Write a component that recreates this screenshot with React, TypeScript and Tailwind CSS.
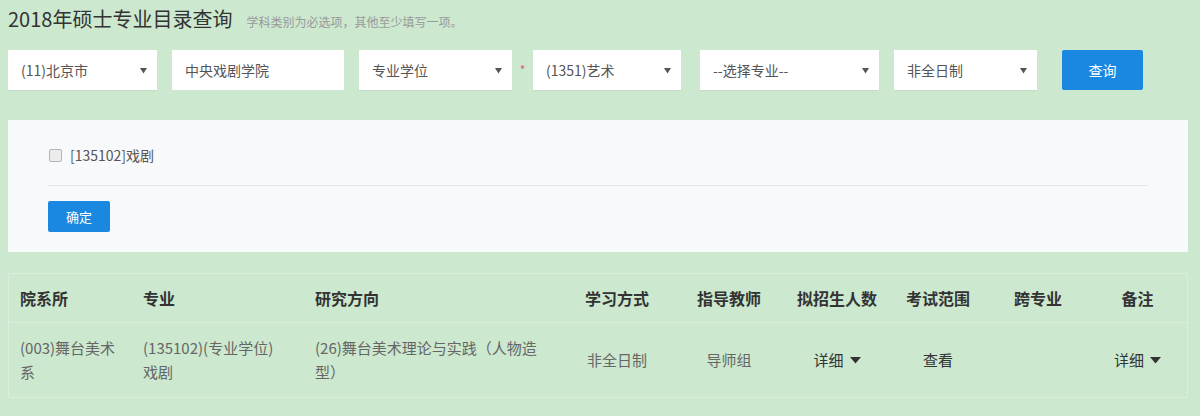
import React from "react";

const font = { fontFamily: '"Microsoft YaHei", "Noto Sans CJK SC", "Liberation Sans", sans-serif' };

function Arrow() {
  return (
    <svg width="7" height="7" viewBox="0 0 7 7" className="shrink-0">
      <path d="M0 1h7L3.5 6.5z" fill="#555" />
    </svg>
  );
}

function Select({ w, label }: { w: string; label: string }) {
  return (
    <div className={`${w} h-[40px] shrink-0 bg-white flex items-center justify-between pl-[13px] pr-[10px] text-[14px] text-[#555] shadow-[0_1px_1px_rgba(0,0,0,0.04)]`}>
      <span>{label}</span>
      <Arrow />
    </div>
  );
}

function Caret() {
  return (
    <svg width="11" height="7" viewBox="0 0 11 7" className="ml-[6px] inline-block">
      <path d="M0 0h11L5.5 6.5z" fill="#333" />
    </svg>
  );
}

export default function App() {
  return (
    <div className="w-[1200px] h-[416px] bg-[#cce8cf] pl-[8px] pr-[12px] pt-[4px] text-[#333] overflow-hidden" style={font}>
      <div className="flex items-baseline h-[30px]">
        <h1 className="text-[20px] leading-[30px] text-[#333] font-normal">2018年硕士专业目录查询</h1>
        <span className="ml-[14px] text-[12px] text-[#999]">学科类别为必选项，其他至少填写一项。</span>
      </div>

      <div className="flex items-center mt-[16px]">
        <Select w="w-[149px]" label="(11)北京市" />
        <div className="ml-[15px] w-[172px] h-[40px] shrink-0 bg-white flex items-center pl-[13px] text-[14px] text-[#555]">中央戏剧学院</div>
        <div className="ml-[15px]">
          <Select w="w-[153px]" label="专业学位" />
        </div>
        <span className="w-[21px] shrink-0 text-center text-[12px] text-[#e06060]">*</span>
        <Select w="w-[148px]" label="(1351)艺术" />
        <div className="ml-[19px]">
          <Select w="w-[179px]" label="--选择专业--" />
        </div>
        <div className="ml-[15px]">
          <Select w="w-[143px]" label="非全日制" />
        </div>
        <button className="ml-[25px] w-[81px] h-[40px] shrink-0 bg-[#1a87e0] text-white text-[14px] rounded-[2px]">查询</button>
      </div>

      <div className="mt-[30px] h-[132px] bg-[#f7f9fa] px-[40px] pt-[24px]">
        <div className="flex items-center h-[22px] text-[14px] text-[#555]">
          <span className="ml-[1px] w-[13px] h-[13px] border border-[#b5b5b5] rounded-[2px] bg-[#ececec]" />
          <span className="ml-[8px]">[135102]戏剧</span>
        </div>
        <div className="mt-[19px] h-px bg-[#e3e6e8]" />
        <button className="mt-[15px] w-[62px] h-[31px] bg-[#1a87e0] text-white text-[13px] rounded-[2px]">确定</button>
      </div>

      <div className="mt-[21px] border border-[#dbeedd]">
        <div className="flex h-[49px] items-center text-[16px] font-bold text-[#333] border-b border-[#dbeedd]">
          <div className="w-[123px] pl-[11px]">院系所</div>
          <div className="w-[172px] pl-[11px]">专业</div>
          <div className="w-[258px] pl-[11px]">研究方向</div>
          <div className="w-[110px] text-center">学习方式</div>
          <div className="w-[114px] text-center">指导教师</div>
          <div className="w-[102px] text-center">拟招生人数</div>
          <div className="w-[100px] text-center">考试范围</div>
          <div className="w-[100px] text-center">跨专业</div>
          <div className="flex-1 text-center">备注</div>
        </div>
        <div className="flex h-[74px] items-center text-[15px] leading-[24px] text-[#666]">
          <div className="w-[123px] pl-[11px]">(003)舞台美术<br />系</div>
          <div className="w-[172px] pl-[11px]">(135102)(专业学位)<br />戏剧</div>
          <div className="w-[258px] pl-[11px]">(26)舞台美术理论与实践（人物造<br />型）</div>
          <div className="w-[110px] text-center">非全日制</div>
          <div className="w-[114px] text-center">导师组</div>
          <div className="w-[102px] text-center text-[#333] flex items-center justify-center">详细<Caret /></div>
          <div className="w-[100px] text-center text-[#333]">查看</div>
          <div className="w-[100px] text-center" />
          <div className="flex-1 text-[#333] flex items-center justify-center">详细<Caret /></div>
        </div>
      </div>
    </div>
  );
}
